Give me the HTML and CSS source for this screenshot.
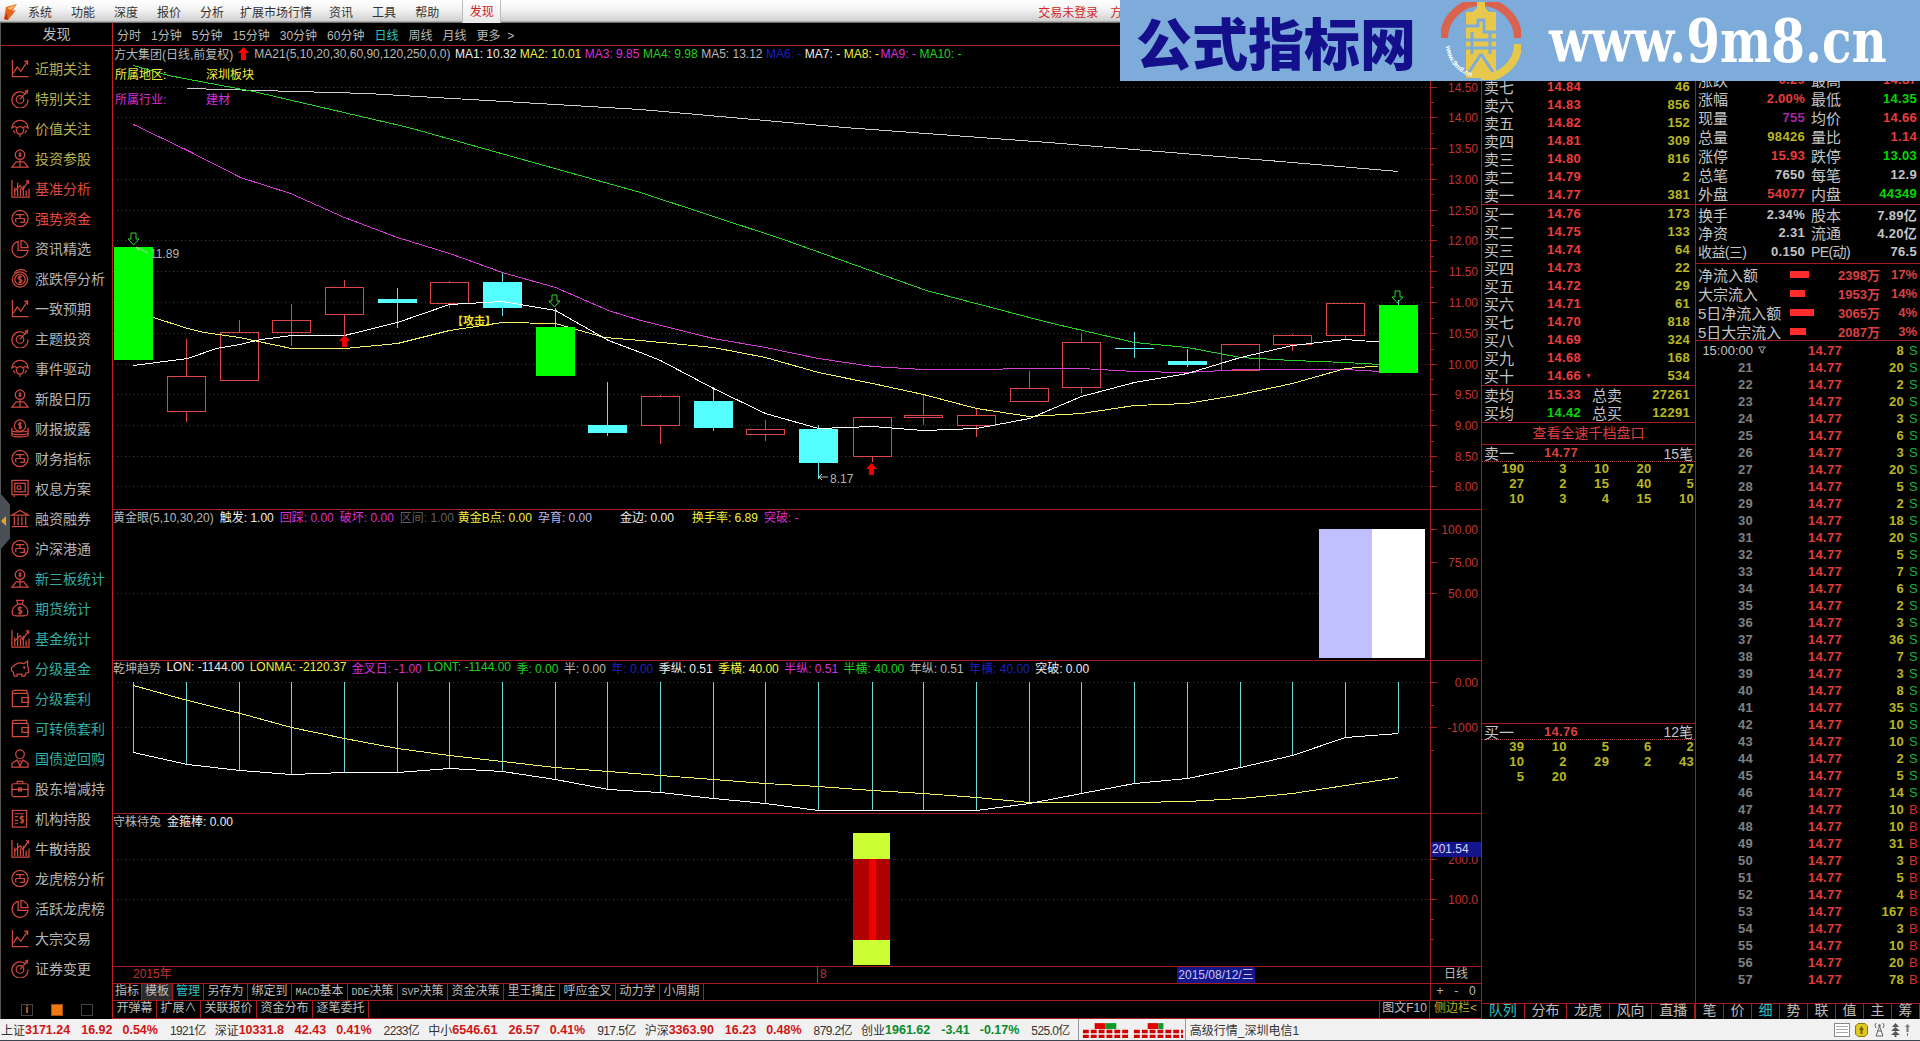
FILE: index.html
```html
<!DOCTYPE html>
<html lang="zh-CN">
<head>
    <meta charset="UTF-8">
    <title>方大集团 日线</title>
    <link rel="stylesheet" href="styles.css">
</head>
<body>

<!-- icon set for the left panel -->
<svg class="defs" width="0" height="0">
    <symbol id="i-trend" viewBox="0 0 20 20"><path d="M2 1V18.5H19"/><path d="M3 15L7 8.5L11 13L18 2"/><path d="M14.5 2.5L18 2L18 6"/></symbol>
    <symbol id="i-target" viewBox="0 0 20 20"><path d="M16 5.5A8.5 8.5 0 1 0 18.5 11"/><circle cx="10" cy="11" r="4"/><path d="M10 11L17 3"/><path d="M15 2.5L18 1.5L17.5 5"/></symbol>
    <symbol id="i-umbrella" viewBox="0 0 20 20"><path d="M1.5 9.5A8.5 8 0 0 1 18.5 9.5C16.5 7.5 14.5 7.5 13 9.5C11.5 7.5 8.5 7.5 7 9.5C5.5 7.5 3.5 7.5 1.5 9.5Z"/><path d="M6 10C6 14 8 16 10 16C12 16 14 14 14 10"/><path d="M10 16V19"/><path d="M3 12L5 15M17 12L15 15"/></symbol>
    <symbol id="i-person" viewBox="0 0 20 20"><circle cx="10" cy="6" r="5"/><path d="M10 3.5V8.5M8.5 5H11.5M8.5 7H11.5"/><path d="M1.5 19L6 13.5H14L18.5 19Z"/><path d="M10 11V19"/></symbol>
    <symbol id="i-bars" viewBox="0 0 20 20"><path d="M1.5 1V19H19.5V10"/><path d="M4.5 18V9M7.5 18V4M10.5 18V10M13.5 18V7M16.5 18V12"/><path d="M4 13L10 7L13 11L19 2"/><path d="M16 2H19V5"/></symbol>
    <symbol id="i-coin" viewBox="0 0 20 20"><circle cx="10" cy="10" r="8.5"/><path d="M5.5 6H14.5M10 6V10M5.5 10H14.5V14H10M5.5 10V14"/></symbol>
    <symbol id="i-pie" viewBox="0 0 20 20"><path d="M8 2.5A8.5 8.5 0 1 0 18.5 12H8Z"/><path d="M11 1.5A8 8 0 0 1 18.5 9H11Z"/></symbol>
    <symbol id="i-dollar" viewBox="0 0 20 20"><circle cx="10" cy="11" r="8"/><circle cx="10" cy="11" r="5.5"/><path d="M4 4A9 9 0 0 1 17 3"/><path d="M12 8.5C11 7.5 8 7.5 8 9.5C8 11.5 12 10.5 12 12.5C12 14.5 9 14.5 8 13.5M10 6.5V15.5"/></symbol>
    <symbol id="i-stack" viewBox="0 0 20 20"><circle cx="10" cy="7" r="6"/><path d="M11.5 5C10.5 4 8.5 4.5 8.5 6C8.5 7.5 11.5 6.5 11.5 8.5C11.5 10 9.5 10 8.5 9M10 3V11"/><path d="M1.5 9V12C1.5 14 18.5 14 18.5 12V9"/><path d="M1.5 12V15C1.5 17 18.5 17 18.5 15V12"/><path d="M1.5 15V17C1.5 19.5 18.5 19.5 18.5 17V15"/></symbol>
    <symbol id="i-safe" viewBox="0 0 20 20"><rect x="1.5" y="1.5" width="17" height="15"/><rect x="4.5" y="4.5" width="11" height="9"/><circle cx="9" cy="9" r="2"/><path d="M4 17V19M16 17V19"/></symbol>
    <symbol id="i-bank" viewBox="0 0 20 20"><path d="M1 6.5L10 1.5L19 6.5Z"/><path d="M4 8V17M8 8V17M12 8V17M16 8V17"/><path d="M1.5 18.5H18.5"/></symbol>
    <symbol id="i-bag" viewBox="0 0 20 20"><path d="M6.5 1.5H13.5L12 5.5H8Z"/><path d="M8 5.5C3 8 1 12 2 16C2.5 18.5 17.5 18.5 18 16C19 12 17 8 12 5.5"/><path d="M12 9.5C11 8.5 8 8.5 8 10.5C8 12.5 12 11.5 12 13.5C12 15.5 9 15.5 8 14.5M10 7.5V16.5"/></symbol>
    <symbol id="i-pig" viewBox="0 0 20 20"><path d="M3 8C5 4 11 3 14 5L18 2V8L19 10V14L16 15L15 18H12V16H7V18H4L3 14L1 12V9Z"/><circle cx="14.5" cy="9" r=".6"/></symbol>
    <symbol id="i-wallet" viewBox="0 0 20 20"><path d="M2 3.5C2 2 3 1.5 4 1.5H17L17.5 4.5H2"/><path d="M2 3.5V18.5H18.5V4.5"/><rect x="12" y="9" width="7" height="5"/></symbol>
    <symbol id="i-man" viewBox="0 0 20 20"><circle cx="10" cy="5.5" r="4.5"/><path d="M1.5 19V15L7 11.5L10 18L13 11.5L18.5 15V19Z"/><path d="M10 11.5V14"/></symbol>
    <symbol id="i-case" viewBox="0 0 20 20"><path d="M7 5V2.5H13V5"/><rect x="1.5" y="5" width="17" height="13.5" rx="2"/><path d="M1.5 11H18.5"/><rect x="8.5" y="9.5" width="3" height="3"/></symbol>
    <symbol id="i-doc" viewBox="0 0 20 20"><rect x="2" y="1.5" width="15" height="17.5"/><path d="M4.5 5H14M4.5 8H8M4.5 12H8M4.5 15H8"/><path d="M14 8.5C13 7.5 10 7.5 10 9.5C10 11.5 14 10.5 14 12.5C14 14.5 11 14.5 10 13.5M12 6.5V15.5"/></symbol>
</svg>

<div class="menubar">
    <svg class="app-logo" viewBox="0 0 16 18"><path d="M2 16L4 4L15 1L10 8L14 7L6 17Z" fill="#e8641c"/><path d="M5 5L14 2L9 7Z" fill="#f8c060"/><path d="M2 16L6 17L5 10Z" fill="#c03010"/></svg>
    <a class="menu-item">系统</a>
    <a class="menu-item">功能</a>
    <a class="menu-item">深度</a>
    <a class="menu-item">报价</a>
    <a class="menu-item">分析</a>
    <a class="menu-item menu-wide">扩展市场行情</a>
    <a class="menu-item">资讯</a>
    <a class="menu-item">工具</a>
    <a class="menu-item">帮助</a>
    <a class="menu-item menu-active">发现</a>
    <span class="menu-login">交易未登录</span>
    <span class="menu-stock">方</span>
</div>

<!-- site watermark pasted on top of the window -->
<div class="banner">
    <span class="banner-title">公式指标网</span>
    <svg class="banner-logo" viewBox="0 0 80 78">
        <path d="M3 36A36 35 0 0 1 77 36" fill="none" stroke="#d9634e" stroke-width="8"/>
        <path d="M77 42A36 34 0 0 1 40 76" fill="none" stroke="#e8c84a" stroke-width="8"/>
        <path d="M36 0H44V6L48 10H32L36 6Z" fill="#e8c84a"/>
        <rect x="25" y="10" width="30" height="66" fill="#e8c84a"/>
        <path d="M25 24H37V18H43V30H55M25 38H55M31 30V52M49 30V52M25 46H55M40 52L28 70M40 52L52 70" fill="none" stroke="#7dabda" stroke-width="3"/>
        <path id="logo-arc" d="M5 44A36 34 0 0 0 36 76" fill="none"/>
        <text class="banner-logo-text"><textPath href="#logo-arc">www.9m8.cn</textPath></text>
    </svg>
    <span class="banner-url">www.9m8.cn</span>
</div>

<div class="main">

    <aside class="side">
        <div class="side-title">发现</div>
        <ul class="side-list">
            <li class="yellow"><svg><use href="#i-trend"/></svg>近期关注</li>
            <li class="yellow"><svg><use href="#i-target"/></svg>特别关注</li>
            <li class="yellow"><svg><use href="#i-umbrella"/></svg>价值关注</li>
            <li class="yellow"><svg><use href="#i-person"/></svg>投资参股</li>
            <li class="red"><svg><use href="#i-bars"/></svg>基准分析</li>
            <li class="red"><svg><use href="#i-coin"/></svg>强势资金</li>
            <li><svg><use href="#i-pie"/></svg>资讯精选</li>
            <li><svg><use href="#i-dollar"/></svg>涨跌停分析</li>
            <li><svg><use href="#i-trend"/></svg>一致预期</li>
            <li><svg><use href="#i-target"/></svg>主题投资</li>
            <li><svg><use href="#i-umbrella"/></svg>事件驱动</li>
            <li><svg><use href="#i-person"/></svg>新股日历</li>
            <li><svg><use href="#i-stack"/></svg>财报披露</li>
            <li><svg><use href="#i-coin"/></svg>财务指标</li>
            <li><svg><use href="#i-safe"/></svg>权息方案</li>
            <li><svg><use href="#i-bank"/></svg>融资融券</li>
            <li><svg><use href="#i-coin"/></svg>沪深港通</li>
            <li class="teal"><svg><use href="#i-person"/></svg>新三板统计</li>
            <li class="teal"><svg><use href="#i-bag"/></svg>期货统计</li>
            <li class="teal"><svg><use href="#i-bars"/></svg>基金统计</li>
            <li class="teal"><svg><use href="#i-pig"/></svg>分级基金</li>
            <li class="teal"><svg><use href="#i-wallet"/></svg>分级套利</li>
            <li class="teal"><svg><use href="#i-wallet"/></svg>可转债套利</li>
            <li class="teal"><svg><use href="#i-man"/></svg>国债逆回购</li>
            <li><svg><use href="#i-case"/></svg>股东增减持</li>
            <li><svg><use href="#i-doc"/></svg>机构持股</li>
            <li><svg><use href="#i-bars"/></svg>牛散持股</li>
            <li><svg><use href="#i-coin"/></svg>龙虎榜分析</li>
            <li><svg><use href="#i-pie"/></svg>活跃龙虎榜</li>
            <li><svg><use href="#i-trend"/></svg>大宗交易</li>
            <li><svg><use href="#i-target"/></svg>证券变更</li>
        </ul>
        <div class="side-foot">
            <span class="foot-btn foot-info">i</span>
            <span class="foot-btn foot-on"></span>
            <span class="foot-btn"></span>
        </div>
        <div class="side-handle"><i></i></div>
    </aside>

    <section class="center">
        <div class="periods">
            <a>分时</a><a>1分钟</a><a>5分钟</a><a>15分钟</a><a>30分钟</a><a>60分钟</a>
            <a class="on">日线</a><a>周线</a><a>月线</a><a>更多 &nbsp;&gt;</a>
        </div>

        <!-- main K line panel, svg uses page coordinates through viewBox -->
        <div class="panel panel-main">
            <svg class="chart" width="1368" height="463" viewBox="113 46 1368 463">
                <path class="grid" d="M113 87.5H1430M113 117.5H1430M113 148.5H1430M113 179.5H1430M113 210.5H1430M113 240.5H1430M113 271.5H1430M113 302.5H1430M113 333.5H1430M113 364.5H1430M113 394.5H1430M113 425.5H1430M113 456.5H1430M113 486.5H1430"/>
                <path class="axis" d="M1430.5 46V509M1430 87.5H1437M1430 117.5H1437M1430 148.5H1437M1430 179.5H1437M1430 210.5H1437M1430 240.5H1437M1430 271.5H1437M1430 302.5H1437M1430 333.5H1437M1430 364.5H1437M1430 394.5H1437M1430 425.5H1437M1430 456.5H1437M1430 486.5H1437M1430 102.5H1434M1430 133.5H1434M1430 164.5H1434M1430 194.5H1434M1430 225.5H1434M1430 256.5H1434M1430 287.5H1434M1430 318.5H1434M1430 349.5H1434M1430 379.5H1434M1430 410.5H1434M1430 441.5H1434M1430 471.5H1434"/>
                <g class="ax">
                    <text x="1478" y="92">14.50</text><text x="1478" y="122">14.00</text><text x="1478" y="153">13.50</text><text x="1478" y="184">13.00</text><text x="1478" y="215">12.50</text><text x="1478" y="245">12.00</text><text x="1478" y="276">11.50</text><text x="1478" y="307">11.00</text><text x="1478" y="338">10.50</text><text x="1478" y="369">10.00</text><text x="1478" y="399">9.50</text><text x="1478" y="430">9.00</text><text x="1478" y="461">8.50</text><text x="1478" y="491">8.00</text>
                </g>

                <!-- hollow up candles -->
                <path class="c-up" d="M186.5 339V376M186.5 412V422M239.5 320V332M291.5 304V346M344.5 280V287M344.5 314V336M449.5 281V282M449.5 304V308M660.5 395V396M660.5 426V444M765.5 420V429M765.5 435V441M872.5 457V462M923.5 395V415M923.5 418V425M976.5 408V415M976.5 426V437M1029.5 371V388M1081.5 333V342M1081.5 388V393M1292.5 334V335M1292.5 345V351M1345.5 335V340"/>
                <g class="c-up">
                    <rect x="167.5" y="376.5" width="38" height="35"/><rect x="220.5" y="332.5" width="38" height="48"/><rect x="272.5" y="320.5" width="38" height="12"/><rect x="325.5" y="287.5" width="38" height="27"/><rect x="430.5" y="282.5" width="38" height="21"/><rect x="641.5" y="396.5" width="38" height="29"/><rect x="746.5" y="429.5" width="38" height="5"/><rect x="853.5" y="417.5" width="38" height="39"/><rect x="904.5" y="415.5" width="38" height="2"/><rect x="957.5" y="415.5" width="38" height="10"/><rect x="1010.5" y="388.5" width="38" height="13"/><rect x="1062.5" y="342.5" width="38" height="45"/><rect x="1221.5" y="344.5" width="38" height="26"/><rect x="1273.5" y="335.5" width="38" height="9"/><rect x="1326.5" y="303.5" width="38" height="32"/>
                </g>

                <!-- cyan down candles -->
                <path class="c-wick" d="M397.5 288V328M502.5 273V316M607.5 382V436M713.5 387V431M818.5 425V479M1134.5 332V358M1187.5 349V367"/>
                <g class="c-down">
                    <rect x="378" y="299" width="39" height="4"/><rect x="483" y="282" width="39" height="26"/><rect x="588" y="425" width="39" height="8"/><rect x="694" y="401" width="39" height="27"/><rect x="799" y="429" width="39" height="34"/><rect x="1115" y="348" width="39" height="1"/><rect x="1168" y="361" width="39" height="4"/>
                </g>

                <polyline class="ma ma-grey" points="187,88 367,93 640,109 844,127 1048,142 1280,161 1398,171"/>
                <polyline class="ma ma-green" points="133,65 168,75 253,91 408,127 640,192 783,239 926,290 1048,322 1134,342 1187,347 1240,357 1292,360 1345,362 1398,365"/>
                <polyline class="ma ma-purple" points="133,124 187,150 240,177 290,193 344,217 397,237 449,253 502,272 555,287 608,310 640,320 713,338 765,347 818,358 872,366 923,369 976,369 1029,368 1081,368 1134,371 1187,372 1240,369 1292,369 1345,369 1398,372"/>
                <polyline class="ma ma-yellow" points="133,313 153,317 187,328 204,332 239,337 291,348 344,348 397,343 449,330 502,322 555,323 604,337 640,340 713,347 765,357 818,372 872,383 923,394 976,408 1029,416 1081,413 1134,405 1187,403 1240,394 1292,383 1345,368 1398,364"/>
                <polyline class="ma ma-white" points="133,365 187,358 216,348 239,344 261,339 291,335 344,335 397,322 449,304 502,301 555,310 608,340 640,352 660,360 713,388 765,413 818,428 872,426 923,430 976,428 1029,418 1081,396 1134,382 1187,373 1240,357 1292,345 1345,339 1398,343"/>

                <!-- solid green candles sit over the averages -->
                <path class="c-wick" d="M555.5 308V327M1398.5 300V305"/>
                <g class="c-green">
                    <rect x="114" y="247" width="39" height="113"/><rect x="536" y="327" width="39" height="49"/><rect x="1379" y="305" width="39" height="68"/>
                </g>

                <g class="sig-down">
                    <path d="M131 233H136V239H139L133.5 245L128 239H131Z"/><path d="M552 295H557V301H560L554.5 307L549 301H552Z"/><path d="M1395 291H1400V297H1403L1397.5 303L1392 297H1395Z"/>
                </g>
                <g class="sig-up">
                    <path d="M344.5 335L350 341H347V347H342V341H339Z"/><path d="M871.5 463L877 469H874V475H869V469H866Z"/>
                </g>
                <g class="note">
                    <path d="M136 247L148 253M136 247L139 250"/>
                    <path d="M819 477H828M819 477L822 474M819 477L822 480"/>
                </g>
                <text class="note-text" x="150" y="258">11.89</text>
                <text class="note-text" x="830" y="483">8.17</text>
                <text class="note-attack" x="452" y="325">【攻击】</text>
            </svg>
            <div class="legend legend-main">
                <span class="c-text">方大集团(日线,前复权)</span>
                <svg class="legend-arrow" viewBox="0 0 11 13"><path d="M5.5 0L11 6H8V13H3V6H0Z" fill="#f00"/></svg>
                <span class="c-text ma-name">MA21(5,10,20,30,60,90,120,250,0,0)</span>
                <span class="c-white ma-first">MA1: 10.32</span>
                <span class="c-yellow">MA2: 10.01</span>
                <span class="c-magenta">MA3: 9.85</span>
                <span class="c-green">MA4: 9.98</span>
                <span class="c-text">MA5: 13.12</span>
                <span class="c-blue">MA6: -</span>
                <span class="c-white">MA7: -</span>
                <span class="c-yellow">MA8: -</span>
                <span class="c-magenta ma-tight">MA9: -</span>
                <span class="c-green">MA10: -</span>
            </div>
            <div class="stock-tag c-yellow tag-a"><span>所属地区:</span><span>深圳板块</span></div>
            <div class="stock-tag c-magenta tag-b"><span>所属行业:</span><span>建材</span></div>
        </div>

        <div class="panel panel-sub">
            <svg class="chart" width="1368" height="150" viewBox="113 510 1368 150">
                <path class="grid" d="M113 593.5H1430"/>
                <path class="axis" d="M1430.5 510V660M1430 529.5H1437M1430 562.5H1437M1430 593.5H1437"/>
                <g class="ax"><text x="1478" y="534">100.00</text><text x="1478" y="567">75.00</text><text x="1478" y="598">50.00</text></g>
                <rect class="bar-lav" x="1319" y="529" width="53" height="129"/>
                <rect class="bar-white" x="1372" y="529" width="53" height="129"/>
            </svg>
            <div class="legend">
                <span class="c-text">黄金眼(5,10,30,20)</span>
                <span class="c-white">触发: 1.00</span>
                <span class="c-magenta">回踩: 0.00</span>
                <span class="c-magenta">破坏: 0.00</span>
                <span class="c-dim">区间: 1.00</span>
                <span class="c-yellow gap-b">黄金B点: 0.00</span>
                <span class="c-lav">孕育: 0.00</span>
                <span class="c-white gap-l">金边: 0.00</span>
                <span class="c-yellow gap-m">换手率: 6.89</span>
                <span class="c-magenta">突破: -</span>
            </div>
        </div>

        <div class="panel panel-sub">
            <svg class="chart" width="1368" height="152" viewBox="113 661 1368 152">
                <path class="grid" d="M113 682.5H1430M113 727.5H1430"/>
                <path class="axis" d="M1430.5 661V813M1430 682.5H1437M1430 727.5H1437M1430 705.5H1434M1430 750.5H1434"/>
                <g class="ax"><text x="1478" y="687">0.00</text><text x="1478" y="732">-1000</text></g>
                <path class="stem" d="M133.5 682V752M186.5 682V764M239.5 682V770M291.5 682V774M344.5 682V772M397.5 682V772M449.5 682V768M502.5 682V771M555.5 682V779M607.5 682V789M660.5 682V792M713.5 682V798M765.5 682V803M818.5 682V810M872.5 682V810M923.5 682V810M976.5 682V810M1029.5 682V803M1081.5 682V793M1134.5 682V783M1187.5 682V778M1240.5 682V767M1292.5 682V755M1345.5 682V737M1398.5 682V733"/>
                <polyline class="ma ma-yellow" points="133,685 187,700 240,713 291,727 344,738 397,748 449,755 502,761 555,767 608,771 660,775 713,779 765,783 818,786 872,790 923,793 976,797 1029,802 1081,802 1134,802 1187,801 1240,798 1292,793 1345,785 1398,777"/>
                <polyline class="ma ma-white" points="133,752 187,764 240,770 291,774 344,772 397,772 449,768 502,771 555,779 608,789 640,791 660,792 713,798 765,803 818,810 872,810 923,810 976,810 1029,803 1081,793 1134,783 1187,778 1240,767 1292,755 1345,737 1398,733"/>
            </svg>
            <div class="legend legend-qk">
                <span class="c-text">乾坤趋势</span>
                <span class="c-white">LON: -1144.00</span>
                <span class="c-yellow">LONMA: -2120.37</span>
                <span class="c-magenta">金叉日: -1.00</span>
                <span class="c-green">LONT: -1144.00</span>
                <span class="c-green">季: 0.00</span>
                <span class="c-text">半: 0.00</span>
                <span class="c-blue">年: 0.00</span>
                <span class="c-white">季纵: 0.51</span>
                <span class="c-yellow">季横: 40.00</span>
                <span class="c-magenta">半纵: 0.51</span>
                <span class="c-green">半横: 40.00</span>
                <span class="c-text">年纵: 0.51</span>
                <span class="c-blue">年横: 40.00</span>
                <span class="c-white">突破: 0.00</span>
            </div>
        </div>

        <div class="panel panel-sub">
            <svg class="chart" width="1368" height="152" viewBox="113 814 1368 152">
                <path class="grid" d="M113 859.5H1430M113 899.5H1430"/>
                <path class="axis" d="M1430.5 814V966M1430 859.5H1437M1430 899.5H1437M1430 879.5H1434M1430 919.5H1434M1430 939.5H1434"/>
                <g class="ax"><text x="1478" y="864">200.0</text><text x="1478" y="904">100.0</text></g>
                <rect class="bar-lime" x="853" y="833" width="37" height="26"/>
                <rect class="bar-red" x="853" y="859" width="37" height="81"/>
                <rect class="bar-red-mid" x="869" y="859" width="7" height="81"/>
                <rect class="bar-lime" x="853" y="940" width="37" height="25"/>
            </svg>
            <div class="legend">
                <span class="c-text">守株待兔</span>
                <span class="c-white">金箍棒: 0.00</span>
            </div>
            <div class="price-tag">201.54</div>
        </div>

        <div class="date-row">
            <span class="date-year">2015年</span>
            <span class="date-month">8</span>
            <span class="date-tag">2015/08/12/三</span>
            <span class="date-period">日线</span>
        </div>

        <div class="tool-row">
            <a class="t-first">指标</a><a class="t2 t-sel">模板</a><a class="t2 t-on">管理</a><a class="t3">另存为</a><a class="t3">绑定到</a><a class="t4"><small>MACD</small>基本</a><a class="t5"><small>DDE</small>决策</a><a class="t5"><small>SVP</small>决策</a><a class="t4">资金决策</a><a class="t4">里王擒庄</a><a class="t4">呼应金叉</a><a class="t3">动力学</a><a class="t3">小周期</a>
            <span class="tool-zoom"><b>+</b><b>-</b><b>0</b></span>
        </div>
        <div class="tool-row tool-row-2">
            <a class="t3">开弹幕</a><a class="t3">扩展∧</a><a class="t4">关联报价</a><a class="t4">资金分布</a><a class="t4">逐笔委托</a>
            <span class="tool-right"><a class="t-f10">图文F10</a><a class="t-sidebar">侧边栏&lt;</a></span>
        </div>
    </section>

    <section class="book">
        <div class="book-rows book-sell">
            <div class="b-row"><span class="b-l">卖七</span><span class="b-p">14.84</span><span class="b-v">46</span></div>
            <div class="b-row"><span class="b-l">卖六</span><span class="b-p">14.83</span><span class="b-v">856</span></div>
            <div class="b-row"><span class="b-l">卖五</span><span class="b-p">14.82</span><span class="b-v">152</span></div>
            <div class="b-row"><span class="b-l">卖四</span><span class="b-p">14.81</span><span class="b-v">309</span></div>
            <div class="b-row"><span class="b-l">卖三</span><span class="b-p">14.80</span><span class="b-v">816</span></div>
            <div class="b-row"><span class="b-l">卖二</span><span class="b-p">14.79</span><span class="b-v">2</span></div>
            <div class="b-row"><span class="b-l">卖一</span><span class="b-p">14.77</span><span class="b-v">381</span></div>
        </div>
        <div class="book-rows">
            <div class="b-row"><span class="b-l">买一</span><span class="b-p">14.76</span><span class="b-v">173</span></div>
            <div class="b-row"><span class="b-l">买二</span><span class="b-p">14.75</span><span class="b-v">133</span></div>
            <div class="b-row"><span class="b-l">买三</span><span class="b-p">14.74</span><span class="b-v">64</span></div>
            <div class="b-row"><span class="b-l">买四</span><span class="b-p">14.73</span><span class="b-v">22</span></div>
            <div class="b-row"><span class="b-l">买五</span><span class="b-p">14.72</span><span class="b-v">29</span></div>
            <div class="b-row"><span class="b-l">买六</span><span class="b-p">14.71</span><span class="b-v">61</span></div>
            <div class="b-row"><span class="b-l">买七</span><span class="b-p">14.70</span><span class="b-v">818</span></div>
            <div class="b-row"><span class="b-l">买八</span><span class="b-p">14.69</span><span class="b-v">324</span></div>
            <div class="b-row"><span class="b-l">买九</span><span class="b-p">14.68</span><span class="b-v">168</span></div>
            <div class="b-row"><span class="b-l">买十</span><span class="b-p">14.66<i class="b-mark">▼</i></span><span class="b-v">534</span></div>
        </div>
        <div class="book-rows">
            <div class="b-row b-avg"><span class="b-l">卖均</span><span class="b-p">15.33</span><span class="b-l2">总卖</span><span class="b-v">27261</span></div>
            <div class="b-row b-avg"><span class="b-l">买均</span><span class="b-p up-green">14.42</span><span class="b-l2">总买</span><span class="b-v">12291</span></div>
        </div>
        <div class="book-link">查看全速千档盘口</div>
        <div class="queue">
            <div class="q-head"><span class="b-l">卖一</span><span class="q-price">14.77</span><span class="q-count">15笔</span></div>
            <div class="q-grid">
                <span>190</span><span>3</span><span>10</span><span>20</span><span>27</span>
                <span>27</span><span>2</span><span>15</span><span>40</span><span>5</span>
                <span>10</span><span>3</span><span>4</span><span>15</span><span>10</span>
            </div>
        </div>
        <div class="queue queue-buy">
            <div class="q-head"><span class="b-l">买一</span><span class="q-price">14.76</span><span class="q-count">12笔</span></div>
            <div class="q-grid">
                <span>39</span><span>10</span><span>5</span><span>6</span><span>2</span>
                <span>10</span><span>2</span><span>29</span><span>2</span><span>43</span>
                <span>5</span><span>20</span>
            </div>
        </div>
        <div class="tabs tabs-book">
            <a class="on">队列</a><a>分布</a><a>龙虎</a><a>风向</a><a>直播</a>
        </div>
    </section>

    <section class="info">
        <div class="stats stats-top">
            <span class="s-l">涨跌</span><span class="s-v red">0.29</span><span class="s-l2">最高</span><span class="s-v red">14.87</span>
            <span class="s-l">涨幅</span><span class="s-v red">2.00%</span><span class="s-l2">最低</span><span class="s-v green">14.35</span>
            <span class="s-l">现量</span><span class="s-v purple">755</span><span class="s-l2">均价</span><span class="s-v red">14.66</span>
            <span class="s-l">总量</span><span class="s-v yellow">98426</span><span class="s-l2">量比</span><span class="s-v red">1.14</span>
            <span class="s-l">涨停</span><span class="s-v red">15.93</span><span class="s-l2">跌停</span><span class="s-v green">13.03</span>
            <span class="s-l">总笔</span><span class="s-v">7650</span><span class="s-l2">每笔</span><span class="s-v">12.9</span>
            <span class="s-l">外盘</span><span class="s-v red">54077</span><span class="s-l2">内盘</span><span class="s-v green">44349</span>
        </div>
        <div class="stats stats-mid">
            <span class="s-l">换手</span><span class="s-v">2.34%</span><span class="s-l2">股本</span><span class="s-v">7.89亿</span>
            <span class="s-l">净资</span><span class="s-v">2.31</span><span class="s-l2">流通</span><span class="s-v">4.20亿</span>
            <span class="s-l s-nowrap">收益(三)</span><span class="s-v">0.150</span><span class="s-l2 s-nowrap">PE(动)</span><span class="s-v">76.5</span>
        </div>
        <div class="flows">
            <div class="f-row"><span class="s-l">净流入额</span><span class="f-val"><i class="f-bar" style="width:19px"></i>2398万</span><span class="f-pct">17%</span></div>
            <div class="f-row"><span class="s-l">大宗流入</span><span class="f-val"><i class="f-bar" style="width:15px"></i>1953万</span><span class="f-pct">14%</span></div>
            <div class="f-row"><span class="s-l">5日净流入额</span><span class="f-val"><i class="f-bar" style="width:24px"></i>3065万</span><span class="f-pct">4%</span></div>
            <div class="f-row"><span class="s-l">5日大宗流入</span><span class="f-val"><i class="f-bar" style="width:16px"></i>2087万</span><span class="f-pct">3%</span></div>
        </div>
        <div class="ticks">
            <div class="tick"><span class="t-time">15:00:00<svg class="t-filter" viewBox="0 0 8 8"><path d="M.5 1H7.5L5 4V7L3 6V4Z" fill="none" stroke="#aaa"/></svg></span><span class="t-p">14.77</span><span class="t-v">8</span><span class="t-s">S</span></div>
            <div class="tick"><span class="t-i">21</span><span class="t-p">14.77</span><span class="t-v">20</span><span class="t-s">S</span></div>
            <div class="tick"><span class="t-i">22</span><span class="t-p">14.77</span><span class="t-v">2</span><span class="t-s">S</span></div>
            <div class="tick"><span class="t-i">23</span><span class="t-p">14.77</span><span class="t-v">20</span><span class="t-s">S</span></div>
            <div class="tick"><span class="t-i">24</span><span class="t-p">14.77</span><span class="t-v">3</span><span class="t-s">S</span></div>
            <div class="tick"><span class="t-i">25</span><span class="t-p">14.77</span><span class="t-v">6</span><span class="t-s">S</span></div>
            <div class="tick"><span class="t-i">26</span><span class="t-p">14.77</span><span class="t-v">3</span><span class="t-s">S</span></div>
            <div class="tick"><span class="t-i">27</span><span class="t-p">14.77</span><span class="t-v">20</span><span class="t-s">S</span></div>
            <div class="tick"><span class="t-i">28</span><span class="t-p">14.77</span><span class="t-v">5</span><span class="t-s">S</span></div>
            <div class="tick"><span class="t-i">29</span><span class="t-p">14.77</span><span class="t-v">2</span><span class="t-s">S</span></div>
            <div class="tick"><span class="t-i">30</span><span class="t-p">14.77</span><span class="t-v">18</span><span class="t-s">S</span></div>
            <div class="tick"><span class="t-i">31</span><span class="t-p">14.77</span><span class="t-v">20</span><span class="t-s">S</span></div>
            <div class="tick"><span class="t-i">32</span><span class="t-p">14.77</span><span class="t-v">5</span><span class="t-s">S</span></div>
            <div class="tick"><span class="t-i">33</span><span class="t-p">14.77</span><span class="t-v">7</span><span class="t-s">S</span></div>
            <div class="tick"><span class="t-i">34</span><span class="t-p">14.77</span><span class="t-v">6</span><span class="t-s">S</span></div>
            <div class="tick"><span class="t-i">35</span><span class="t-p">14.77</span><span class="t-v">2</span><span class="t-s">S</span></div>
            <div class="tick"><span class="t-i">36</span><span class="t-p">14.77</span><span class="t-v">3</span><span class="t-s">S</span></div>
            <div class="tick"><span class="t-i">37</span><span class="t-p">14.77</span><span class="t-v">36</span><span class="t-s">S</span></div>
            <div class="tick"><span class="t-i">38</span><span class="t-p">14.77</span><span class="t-v">7</span><span class="t-s">S</span></div>
            <div class="tick"><span class="t-i">39</span><span class="t-p">14.77</span><span class="t-v">3</span><span class="t-s">S</span></div>
            <div class="tick"><span class="t-i">40</span><span class="t-p">14.77</span><span class="t-v">8</span><span class="t-s">S</span></div>
            <div class="tick"><span class="t-i">41</span><span class="t-p">14.77</span><span class="t-v">35</span><span class="t-s">S</span></div>
            <div class="tick"><span class="t-i">42</span><span class="t-p">14.77</span><span class="t-v">10</span><span class="t-s">S</span></div>
            <div class="tick"><span class="t-i">43</span><span class="t-p">14.77</span><span class="t-v">10</span><span class="t-s">S</span></div>
            <div class="tick"><span class="t-i">44</span><span class="t-p">14.77</span><span class="t-v">2</span><span class="t-s">S</span></div>
            <div class="tick"><span class="t-i">45</span><span class="t-p">14.77</span><span class="t-v">5</span><span class="t-s">S</span></div>
            <div class="tick"><span class="t-i">46</span><span class="t-p">14.77</span><span class="t-v">14</span><span class="t-s">S</span></div>
            <div class="tick"><span class="t-i">47</span><span class="t-p">14.77</span><span class="t-v">10</span><span class="t-b">B</span></div>
            <div class="tick"><span class="t-i">48</span><span class="t-p">14.77</span><span class="t-v">10</span><span class="t-b">B</span></div>
            <div class="tick"><span class="t-i">49</span><span class="t-p">14.77</span><span class="t-v">31</span><span class="t-b">B</span></div>
            <div class="tick"><span class="t-i">50</span><span class="t-p">14.77</span><span class="t-v">3</span><span class="t-b">B</span></div>
            <div class="tick"><span class="t-i">51</span><span class="t-p">14.77</span><span class="t-v">5</span><span class="t-b">B</span></div>
            <div class="tick"><span class="t-i">52</span><span class="t-p">14.77</span><span class="t-v">4</span><span class="t-b">B</span></div>
            <div class="tick"><span class="t-i">53</span><span class="t-p">14.77</span><span class="t-v">167</span><span class="t-b">B</span></div>
            <div class="tick"><span class="t-i">54</span><span class="t-p">14.77</span><span class="t-v">3</span><span class="t-b">B</span></div>
            <div class="tick"><span class="t-i">55</span><span class="t-p">14.77</span><span class="t-v">10</span><span class="t-b">B</span></div>
            <div class="tick"><span class="t-i">56</span><span class="t-p">14.77</span><span class="t-v">20</span><span class="t-b">B</span></div>
            <div class="tick"><span class="t-i">57</span><span class="t-p">14.77</span><span class="t-v">78</span><span class="t-b">B</span></div>
        </div>
        <div class="tabs tabs-info">
            <a>笔</a><a>价</a><a class="on">细</a><a>势</a><a>联</a><a>值</a><a>主</a><a>筹</a>
        </div>
    </section>
</div>

<footer class="status">
    <span class="i-name">上证</span><b class="i-up i-val">3171.24</b><b class="i-up i-chg">16.92</b><b class="i-up i-pct">0.54%</b><span class="i-vol">1921亿</span>
    <span class="i-name">深证</span><b class="i-up i-val">10331.8</b><b class="i-up i-chg">42.43</b><b class="i-up i-pct">0.41%</b><span class="i-vol">2233亿</span>
    <span class="i-name">中小</span><b class="i-up i-val">6546.61</b><b class="i-up i-chg">26.57</b><b class="i-up i-pct">0.41%</b><span class="i-vol">917.5亿</span>
    <span class="i-name">沪深</span><b class="i-up i-val">3363.90</b><b class="i-up i-chg">16.23</b><b class="i-up i-pct">0.48%</b><span class="i-vol">879.2亿</span>
    <span class="i-name">创业</span><b class="i-dn i-val">1961.62</b><b class="i-dn i-chg">-3.41</b><b class="i-dn i-pct">-0.17%</b><span class="i-vol">525.0亿</span>
    <svg class="net-bars" width="108" height="21" viewBox="0 0 108 21">
        <rect x="16" y="4" width="11" height="6" fill="#e00000"/><rect x="27" y="4" width="11" height="6" fill="#0a9a2a"/>
        <rect x="70" y="4" width="11" height="6" fill="#e00000"/><rect x="81" y="4" width="5" height="6" fill="#0a9a2a"/>
        <path d="M4 12.5H52M4 17.5H52M56 12.5H106M56 17.5H106" stroke="#d00000" stroke-width="3.5" stroke-dasharray="6 2" fill="none"/>
    </svg>
    <span class="server">高级行情_深圳电信1</span>
    <span class="tray">
        <svg width="16" height="14" viewBox="0 0 16 14"><rect x=".5" y=".5" width="15" height="13" fill="#fff" stroke="#888"/><path d="M2 3.5H14M2 6.5H14M2 9.5H14" stroke="#aaa"/></svg>
        <svg width="13" height="14" viewBox="0 0 13 14"><path d="M3 .5H10L12.5 3V11L10 13.5H3L.5 11V3Z" fill="#e0c820" stroke="#8a7a10"/><path d="M6.5 3L9 7H4ZM5.5 7H7.5V11H5.5Z" fill="#706008"/></svg>
        <svg width="13" height="15" viewBox="0 0 13 15"><path d="M6.5 4L3 14H10ZM4.5 9H8.5" fill="none" stroke="#666"/><path d="M3 1A4 4 0 0 0 3 6M10 1A4 4 0 0 1 10 6" fill="none" stroke="#666"/><circle cx="6.5" cy="3.5" r="1.2" fill="#666"/></svg>
        <svg width="9" height="14" viewBox="0 0 9 14"><path d="M4.5 0L8 4H1ZM4.5 4L9 8H0ZM4.5 8L9 12H0ZM3.5 12H5.5V14H3.5Z" fill="#555"/></svg>
        <svg width="5" height="12" viewBox="0 0 5 12"><path d="M2.5 0L5 3H3.5V8H1.5V3H0ZM2 9H3V12H2Z" fill="#777"/></svg>
    </span>
</footer>

</body>
</html>
```

FILE: styles.css
```css
* {
    box-sizing: border-box;
}

body {
    margin: 0;
    width: 1920px;
    height: 1041px;
    overflow: hidden;
    position: relative;
    display: flex;
    flex-direction: column;
    background: #000;
    color: #bdbdbd;
    font-family: "Liberation Sans", "Noto Sans CJK SC", sans-serif;
    font-size: 12px;
}

a {
    color: inherit;
    text-decoration: none;
}

.defs {
    position: absolute;
}

/* top menu */

.menubar {
    height: 23px;
    flex: none;
    display: flex;
    align-items: center;
    padding-left: 2px;
    background: linear-gradient(#ffffff, #f4f4f4 40%, #cfcfcf 92%, #6e6e6e 96%);
    color: #333;
}

.app-logo {
    width: 16px;
    height: 18px;
    margin-right: 10px;
}

.menu-item {
    margin-right: 19px;
}

.menu-wide {
    margin-left: -3px;
    margin-right: 17px;
}

.menu-active {
    margin-left: 4px;
    margin-right: 0;
    height: 23px;
    width: 39px;
    line-height: 24px;
    text-align: center;
    color: #d02020;
    background: linear-gradient(#fff, #e8e8e8);
    border-left: 1px solid #bbb;
    border-right: 1px solid #bbb;
}

.menu-login {
    margin-left: 537px;
    color: #d02828;
}

.menu-stock {
    margin-left: 12px;
    color: #d02828;
}

/* watermark */

.banner {
    position: absolute;
    z-index: 5;
    left: 1120px;
    top: 0;
    width: 800px;
    height: 81px;
    display: flex;
    align-items: center;
    background: #7dabda;
}

.banner-title {
    margin-left: 16px;
    flex: none;
    font-family: "Noto Sans CJK SC", sans-serif;
    font-size: 56px;
    font-weight: 900;
    line-height: 81px;
    color: #14108c;
    white-space: nowrap;
}

.banner-logo {
    margin-left: 25px;
    width: 80px;
    height: 78px;
    flex: none;
}

.banner-logo-text {
    font-size: 7px;
    font-weight: bold;
    fill: #fff;
}

.banner-url {
    margin-left: 28px;
    font-family: "DejaVu Serif", serif;
    font-size: 48.5px;
    font-weight: bold;
    line-height: 60px;
    color: #fff;
    white-space: nowrap;
    transform: scaleY(1.25);
}

/* layout */

.main {
    flex: none;
    height: 996px;
    display: flex;
}

/* left panel */

.side {
    width: 113px;
    flex: none;
    position: relative;
    display: flex;
    flex-direction: column;
    border-right: 1px solid #c02020;
    border-left: 1px solid #555;
}

.side-title {
    height: 23px;
    flex: none;
    line-height: 22px;
    text-align: center;
    font-size: 14px;
    color: #bbb;
    border-bottom: 1px solid #b02020;
}

.side-list {
    list-style: none;
    margin: 0;
    padding: 7px 0 0;
    flex: 1;
}

.side-list li {
    height: 30px;
    display: flex;
    align-items: center;
    font-size: 14px;
    white-space: nowrap;
    color: #b4b4b4;
}

.side-list svg {
    width: 20px;
    height: 19px;
    margin: 0 5px 0 9px;
    flex: none;
    fill: none;
    stroke: #d24a3e;
    stroke-width: 1.3;
}

.side-list .yellow {
    color: #b0b050;
}

.side-list .red {
    color: #e04a3c;
}

.side-list .teal {
    color: #32aea2;
}

.side-foot {
    display: flex;
    gap: 18px;
    padding: 4px 0 0 20px;
    height: 19px;
}

.foot-btn {
    width: 12px;
    height: 12px;
    border: 1px solid #444;
}

.foot-info {
    color: #e87820;
    font-size: 10px;
    font-weight: bold;
    line-height: 10px;
    text-align: center;
}

.foot-on {
    background: #f07810;
    border-color: #a05010;
}

.side-handle {
    position: absolute;
    left: -1px;
    top: 470px;
    width: 10px;
    height: 57px;
    background: #4a4f55;
    clip-path: polygon(0 0, 100% 20%, 100% 80%, 0 100%);
}

.side-handle i {
    position: absolute;
    left: 1px;
    top: 23px;
    border: 5px solid transparent;
    border-right-color: #e8a020;
    border-left-width: 0;
}

/* middle: chart stack */

.center {
    width: 1368px;
    flex: none;
    display: flex;
    flex-direction: column;
}

.periods {
    height: 23px;
    flex: none;
    display: flex;
    align-items: center;
    gap: 10px;
    padding-left: 4px;
    border-bottom: 1px solid #b02020;
    color: #b8b8b8;
}

.periods .on {
    color: #30c0c0;
}

.panel {
    position: relative;
    flex: none;
    border-bottom: 1px solid #a81c1c;
}

.chart {
    display: block;
}

.grid {
    fill: none;
    stroke: #7a2020;
    stroke-dasharray: 1 3;
}

.axis {
    fill: none;
    stroke: #a82020;
}

.ax text {
    fill: #c03434;
    font-size: 12px;
    text-anchor: end;
}

.c-up {
    fill: none;
    stroke: #dc4646;
}

.c-wick {
    fill: none;
    stroke: #66e0e0;
}

.c-down {
    fill: #55ffff;
}

.c-green rect {
    fill: #00ff00;
}

.ma {
    fill: none;
    stroke-width: 1;
    shape-rendering: crispEdges;
    transform: translate(.5px, .5px);
}

.ma-white {
    stroke: #fff;
}

.ma-yellow {
    stroke: #f4f468;
}

.ma-purple {
    stroke: #d040d0;
}

.ma-green {
    stroke: #28d028;
}

.ma-grey {
    stroke: #cccccc;
}

.stem {
    fill: none;
    stroke: #70d8d8;
}

.sig-down {
    fill: none;
    stroke: #30d030;
}

.sig-up {
    fill: #f00000;
}

.note {
    fill: none;
    stroke: #c0c0c0;
}

.note-text {
    fill: #b4b4b4;
    font-size: 12px;
}

.note-attack {
    fill: #f0e020;
    font-size: 11px;
    font-weight: bold;
}

.bar-lav {
    fill: #c0c0ff;
}

.bar-white {
    fill: #fff;
}

.bar-lime {
    fill: #ccff33;
}

.bar-red {
    fill: #b00000;
}

.bar-red-mid {
    fill: #f00000;
}

/* indicator legends */

.legend {
    position: absolute;
    left: 0;
    top: -2px;
    height: 16px;
    display: flex;
    align-items: center;
    gap: 6px;
    white-space: nowrap;
}

.legend-main {
    top: 0;
    height: 15px;
    padding-left: 1px;
    gap: 3.5px;
}

.legend-qk {
    gap: 5.4px;
}

.legend-arrow {
    width: 11px;
    height: 13px;
    margin: 0 2px 0 1px;
}

.ma-first {
    margin-left: 1px;
}

.ma-tight {
    margin-left: -2px;
}

.c-text {
    color: #b8b8b8;
}

.c-white {
    color: #eee;
}

.c-yellow {
    color: #f0f040;
}

.c-magenta {
    color: #d830d8;
}

.c-green {
    color: #20d020;
}

.c-blue {
    color: #1820c0;
}

.c-dim {
    color: #606060;
}

.c-lav {
    color: #b8b8f0;
}

.gap-b {
    margin-left: -2px;
}

.gap-l {
    margin-left: 22px;
}

.gap-m {
    margin-left: 12px;
}

.stock-tag {
    position: absolute;
    left: 2px;
    display: flex;
}

.stock-tag span:first-child {
    width: 91px;
}

.tag-a {
    top: 19px;
}

.tag-b {
    top: 44px;
}

.price-tag {
    position: absolute;
    left: 1318px;
    top: 28px;
    width: 50px;
    height: 15px;
    line-height: 15px;
    padding-left: 1px;
    background: #14148c;
    color: #d8d8f0;
}

/* date row + tool rows */

.date-row {
    position: relative;
    height: 17px;
    flex: none;
    border-bottom: 1px solid #a81c1c;
    line-height: 14px;
}

.date-year {
    position: absolute;
    left: 20px;
    top: 0;
    color: #c03434;
}

.date-month {
    position: absolute;
    left: 704px;
    top: 0;
    height: 16px;
    padding-left: 2px;
    border-left: 1px solid #c03434;
    color: #c03434;
}

.date-tag {
    position: absolute;
    left: 1064px;
    top: 0;
    width: 78px;
    height: 16px;
    line-height: 16px;
    text-align: center;
    background: #16168c;
    color: #c8c8f0;
    white-space: nowrap;
}

.date-period {
    position: absolute;
    left: 1317px;
    top: 0;
    width: 51px;
    height: 16px;
    line-height: 15px;
    text-align: center;
    border-left: 1px solid #a81c1c;
}

.tool-row {
    height: 17px;
    flex: none;
    display: flex;
    align-items: center;
    border-bottom: 1px solid #a81c1c;
}

.tool-row-2 {
    height: 18px;
}

.tool-row a {
    height: 100%;
    line-height: 15px;
    text-align: center;
    white-space: nowrap;
    border-right: 1px solid #a81c1c;
    flex: none;
}

.tool-row small {
    font-family: "Liberation Mono", monospace;
    font-size: 10px;
}

.t-first {
    width: 29px;
}

.t2 {
    width: 31px;
}

.t3 {
    width: 44px;
}

.t4 {
    width: 56px;
}

.t5 {
    width: 50px;
}

.t-sel {
    background: #2c2c2c;
}

.t-on {
    color: #30c0c0;
}

.tool-zoom {
    margin-left: auto;
    width: 51px;
    height: 100%;
    display: flex;
    justify-content: space-around;
    border-left: 1px solid #a81c1c;
}

.tool-zoom b {
    font-weight: normal;
    line-height: 15px;
}

.tool-right {
    margin-left: auto;
    display: flex;
    height: 100%;
}

.tool-row .t-f10 {
    width: 51px;
    border-left: 1px solid #a81c1c;
}

.tool-row .t-sidebar {
    width: 51px;
    border-right: 0;
    color: #b0b020;
}

/* order book */

.book {
    width: 214px;
    flex: none;
    display: flex;
    flex-direction: column;
    border-left: 1px solid #a81c1c;
}

.book-rows {
    flex: none;
    border-bottom: 1px solid #a81c1c;
}

.book-sell {
    padding-top: 55px;
}

.b-row {
    height: 18px;
    display: flex;
    align-items: center;
    padding: 0 5px 1px 2px;
    position: relative;
}

.b-l {
    font-size: 15px;
    width: 63px;
    flex: none;
    color: #c4c4c4;
}

.b-p {
    width: 36px;
    flex: none;
    position: relative;
    font-size: 13px;
    font-weight: bold;
    letter-spacing: .3px;
    color: #ee3c3c;
}

.b-v {
    margin-left: auto;
    font-size: 13px;
    font-weight: bold;
    letter-spacing: .3px;
    color: #b8b820;
}

.b-mark {
    position: absolute;
    left: 38px;
    top: 4px;
    font-size: 7px;
    font-style: normal;
    color: #e03030;
}

.b-l2 {
    margin-left: 9px;
    font-size: 15px;
    color: #c4c4c4;
}

.up-green {
    color: #00d800;
}

.book-link {
    height: 22px;
    flex: none;
    line-height: 20px;
    text-align: center;
    font-size: 14px;
    color: #dc4040;
    border-bottom: 1px solid #a81c1c;
}

.queue {
    height: 278px;
    flex: none;
}

.queue-buy {
    flex: 1;
    border-top: 1px solid #a81c1c;
}

.q-head {
    height: 17px;
    display: flex;
    align-items: center;
    padding: 0 2px 1px;
    border-bottom: 1px dotted #a04040;
}

.queue-buy .q-head {
    height: 16px;
}

.q-head .b-l {
    width: 60px;
}

.q-price {
    font-size: 13px;
    font-weight: bold;
    letter-spacing: .3px;
    color: #dc4040;
}

.q-count {
    margin-left: auto;
    font-size: 14px;
    color: #c4c4c4;
}

.q-grid {
    display: grid;
    grid-template-columns: repeat(5, 42.4px);
    grid-auto-rows: 15px;
    line-height: 14px;
    text-align: right;
    font-size: 13px;
    font-weight: bold;
    letter-spacing: .3px;
    color: #b8b820;
}

.tabs {
    height: 16px;
    flex: none;
    display: flex;
    font-size: 14px;
    line-height: 12px;
    text-align: center;
    border-top: 1px solid #a81c1c;
}

.tabs a {
    border-right: 1px solid #a81c1c;
}

.tabs .on {
    color: #30c0c0;
}

.tabs-book a {
    width: 42.6px;
}

.tabs-info a {
    width: 28px;
}

/* stats + ticks column */

.info {
    width: 225px;
    flex: none;
    display: flex;
    flex-direction: column;
    border-left: 1px solid #a81c1c;
}

.stats {
    display: grid;
    grid-template-columns: 32px 75px 38px 74px;
    grid-auto-rows: 19px;
    align-items: center;
    padding-left: 2px;
    border-bottom: 1px solid #a81c1c;
    flex: none;
}

.stats-top {
    padding-top: 47px;
    height: 182px;
}

.stats-mid {
    height: 59px;
    grid-auto-rows: 18.5px;
}

.s-l {
    font-size: 15px;
    white-space: nowrap;
    color: #c4c4c4;
}

.s-l2 {
    padding-left: 6px;
    font-size: 15px;
    white-space: nowrap;
    color: #c4c4c4;
}

.s-nowrap {
    font-size: 14px;
    letter-spacing: -.6px;
}

.s-v {
    text-align: right;
    font-size: 13px;
    font-weight: bold;
    letter-spacing: .3px;
    white-space: nowrap;
    color: #c4c4c4;
}

.red {
    color: #e83c3c;
}

.green {
    color: #00d800;
}

.yellow {
    color: #b8b820;
}

.purple {
    color: #a028a0;
}

.flows {
    height: 77px;
    flex: none;
    border-bottom: 1px solid #a81c1c;
}

.f-row {
    height: 19px;
    display: grid;
    grid-template-columns: 92px 90px 37px;
    align-items: center;
    padding: 0 0 2px 2px;
}

.f-val {
    display: flex;
    align-items: center;
    justify-content: space-between;
    font-size: 13px;
    font-weight: bold;
    color: #dc4040;
}

.f-bar {
    height: 7px;
    background: #ff2c2c;
}

.f-pct {
    text-align: right;
    font-size: 13px;
    font-weight: bold;
    color: #dc4040;
}

.ticks {
    flex: 1;
    padding-top: 1px;
}

.tick {
    height: 17px;
    display: grid;
    grid-template-columns: 57px 89px 62px 17px;
    align-items: center;
    font-size: 13px;
    font-weight: bold;
    letter-spacing: .3px;
}

.t-time {
    position: relative;
    text-align: right;
    font-weight: normal;
    letter-spacing: 0;
    color: #c4c4c4;
}

.t-filter {
    position: absolute;
    right: -13px;
    top: 3px;
    width: 8px;
    height: 8px;
}

.t-i {
    text-align: right;
    color: #808080;
}

.t-p {
    text-align: right;
    color: #e03c3c;
}

.t-v {
    text-align: right;
    color: #b8b820;
}

.t-s {
    padding-left: 5px;
    font-weight: normal;
    color: #18b040;
}

.t-b {
    padding-left: 5px;
    font-weight: normal;
    color: #d82c2c;
}

/* bottom status bar */

.status {
    height: 22px;
    flex: none;
    display: flex;
    align-items: center;
    background: #f1f1f1;
    border-bottom: 1px solid #3c4650;
    color: #333;
    white-space: nowrap;
}

.i-name {
    margin-left: 9px;
    flex: none;
}

.i-name:first-child {
    margin-left: 1px;
}

.i-val,
.i-chg,
.i-pct {
    flex: none;
    font-size: 12.5px;
}

.i-up {
    color: #d01414;
}

.i-dn {
    color: #0a8a2a;
}

.i-chg {
    margin-left: 11px;
}

.i-pct {
    margin-left: 10px;
}

.i-vol {
    margin-left: 12px;
    flex: none;
    letter-spacing: -.6px;
}

.net-bars {
    margin-left: 8px;
    flex: none;
    border-left: 1px solid #999;
    border-right: 1px solid #999;
}

.server {
    margin-left: 4px;
}

.tray {
    margin-left: auto;
    margin-right: 10px;
    display: flex;
    align-items: center;
    gap: 5px;
}
```
